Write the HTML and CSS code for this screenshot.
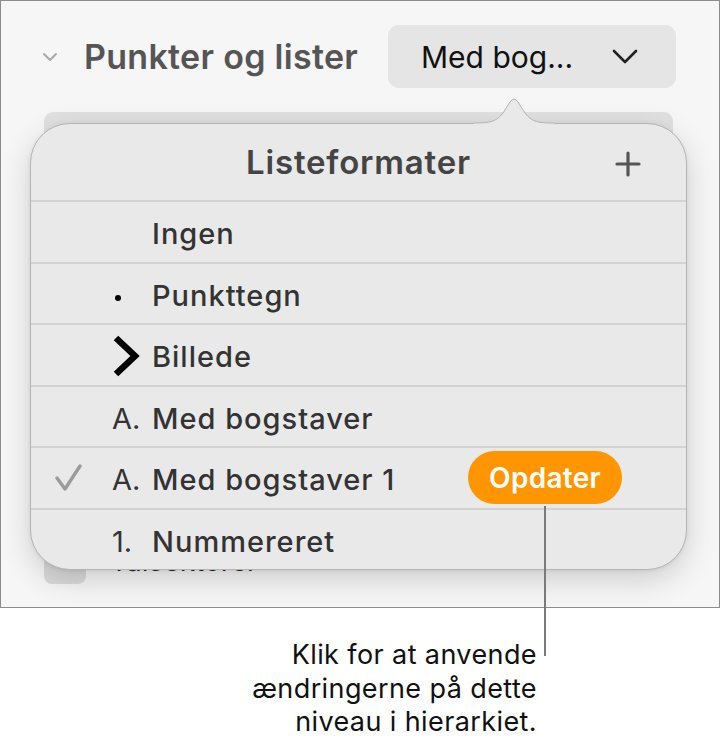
FILE: index.html
```html
<!DOCTYPE html>
<html lang="da">
<head>
    <meta charset="UTF-8">
    <meta name="viewport" content="width=device-width, initial-scale=1.0">
    <title>Listeformater</title>
    <link rel="stylesheet" href="styles.css">
</head>
<body>
    <div class="page">
        <div class="panel">
            <div class="section-header">
                <svg class="disclosure" viewBox="0 0 16 10" fill="none" stroke="currentColor" stroke-width="2" stroke-linecap="round" stroke-linejoin="round">
                    <path d="M2 2l6 6 6-6" />
                </svg>
                <span class="section-title">Punkter og lister</span>
                <div class="popup-button">
                    <span>Med bog...</span>
                    <svg class="popup-chevron" viewBox="0 0 26 18" fill="none" stroke="currentColor" stroke-width="2.6" stroke-linecap="round" stroke-linejoin="round">
                        <path d="M2 3l11 11 11-11" />
                    </svg>
                </div>
            </div>

            <div class="list-box"></div>

            <div class="option-row">
                <span class="checkbox"></span>
                <span class="option-label">Talsektorer</span>
            </div>

            <!-- popover with the list styles -->
            <div class="popover">
                <svg class="popover-arrow" viewBox="0 0 80 34">
                    <path class="arrow-fill" d="M0 30C16 30 22 29 29 20L36 9Q40 3 44 9L51 20C58 29 64 30 80 30V34H0Z" />
                    <path class="arrow-edge" d="M0 30C16 30 22 29 29 20L36 9Q40 3 44 9L51 20C58 29 64 30 80 30" />
                </svg>
                <div class="popover-header">
                    <span class="popover-title">Listeformater</span>
                    <svg class="add-icon" viewBox="0 0 26 26" fill="none" stroke="currentColor" stroke-width="3.2" stroke-linecap="round">
                        <path d="M13 2v22M2 13h22" />
                    </svg>
                </div>
                <ul class="style-list">
                    <li class="style-row">
                        <span class="check"></span>
                        <span class="marker"></span>
                        <span class="style-name">Ingen</span>
                    </li>
                    <li class="style-row">
                        <span class="check"></span>
                        <span class="marker"><span class="bullet"></span></span>
                        <span class="style-name">Punkttegn</span>
                    </li>
                    <li class="style-row">
                        <span class="check"></span>
                        <span class="marker">
                            <svg class="image-bullet" viewBox="0 0 28 42" fill="none" stroke="#000" stroke-width="6.5" stroke-linejoin="miter">
                                <path d="M4 3l19 18-19 18" />
                            </svg>
                        </span>
                        <span class="style-name">Billede</span>
                    </li>
                    <li class="style-row">
                        <span class="check"></span>
                        <span class="marker">A.</span>
                        <span class="style-name">Med bogstaver</span>
                    </li>
                    <li class="style-row">
                        <span class="check">
                            <svg class="check-icon" viewBox="0 0 28 28" fill="none" stroke="currentColor" stroke-width="3.4" stroke-linecap="round" stroke-linejoin="round">
                                <path d="M2 14l8 11L25 2" />
                            </svg>
                        </span>
                        <span class="marker">A.</span>
                        <span class="style-name">Med bogstaver 1</span>
                        <button class="update-button">Opdater</button>
                    </li>
                    <li class="style-row">
                        <span class="check"></span>
                        <span class="marker">1.</span>
                        <span class="style-name">Nummereret</span>
                    </li>
                </ul>
            </div>
        </div>

        <div class="callout-line"></div>
        <p class="callout">Klik for at anvende<br>ændringerne på dette<br>niveau i hierarkiet.</p>
    </div>
</body>
</html>
```

FILE: styles.css
```css
body {
    margin: 0;
    background-color: #fff;
    font-family: Inter, "Noto Sans", sans-serif;
}

.page {
    position: relative;
    width: 721px;
    height: 745px;
}

.panel {
    position: relative;
    box-sizing: border-box;
    width: 720px;
    height: 608px;
    border: 1px solid #8c8c8c;
    background-color: #f6f6f6;
    overflow: hidden;
}

/* section header */

.section-header {
    display: flex;
    align-items: center;
    height: 63px;
    margin-top: 24px;
    padding-left: 41px;
}

.disclosure {
    width: 16px;
    height: 10px;
    color: #a9a9a9;
}

.section-title {
    margin-left: 26px;
    font-size: 34px;
    font-weight: 600;
    color: #555;
    letter-spacing: 0.3px;
}

.popup-button {
    display: flex;
    align-items: center;
    box-sizing: border-box;
    width: 288px;
    height: 63px;
    margin-left: auto;
    margin-right: 43px;
    padding: 0 38px 0 33px;
    border-radius: 11px;
    background-color: #e5e5e5;
    font-size: 30px;
    color: #111;
}

.popup-chevron {
    width: 26px;
    height: 18px;
    margin-left: auto;
    color: #222;
}

/* controls half hidden behind the popover */

.list-box {
    height: 430px;
    margin: 24px 46px 0 43px;
    border-radius: 9px;
    background-color: #e0e0e0;
}

.option-row {
    display: flex;
    align-items: center;
    gap: 24px;
    margin: 12px 0 0 43px;
}

.checkbox {
    width: 42px;
    height: 30px;
    border-radius: 8px;
    background-color: #dadada;
}

.option-label {
    margin-top: -16px;
    font-size: 28px;
    color: #222;
}

/* popover */

.popover {
    position: absolute;
    left: 29px;
    top: 122px;
    box-sizing: border-box;
    width: 657px;
    height: 447px;
    border: 1px solid #b4b4b4;
    border-radius: 40px;
    background-color: #e9e9e9;
    box-shadow: 0 10px 30px rgba(0, 0, 0, 0.16), 0 1px 4px rgba(0, 0, 0, 0.08);
}

.popover-arrow {
    position: absolute;
    left: 443px;
    top: -31px;
    width: 80px;
    height: 34px;
}

.arrow-fill {
    fill: #e9e9e9;
}

.arrow-edge {
    fill: none;
    stroke: #b4b4b4;
    stroke-width: 1;
}

.popover-header {
    position: relative;
    display: flex;
    align-items: center;
    justify-content: center;
    height: 76px;
}

.popover-title {
    font-size: 33px;
    font-weight: 600;
    color: #444;
    letter-spacing: 0.8px;
}

.add-icon {
    position: absolute;
    right: 45px;
    top: 27px;
    width: 26px;
    height: 26px;
    color: #555;
}

.style-list {
    list-style: none;
    margin: 0;
    padding: 0;
}

.style-row {
    display: flex;
    align-items: center;
    box-sizing: border-box;
    height: 61.5px;
    padding-top: 4px;
    border-top: 2px solid #d2d2d2;
    font-size: 29px;
    color: #333;
}

.check {
    display: flex;
    align-items: center;
    justify-content: center;
    width: 76px;
}

.check-icon {
    width: 28px;
    height: 28px;
    margin-top: -4px;
    color: #9b9b9b;
}

.marker {
    display: flex;
    align-items: center;
    box-sizing: border-box;
    width: 45px;
    padding-left: 5px;
    font-weight: 400;
    color: #333;
}

.bullet {
    width: 6px;
    height: 6px;
    margin: 6px 0 0 3px;
    border-radius: 50%;
    background-color: #000;
}

.image-bullet {
    width: 28px;
    height: 42px;
    margin-top: -2px;
}

.style-name {
    font-weight: 500;
    letter-spacing: 1px;
}

.update-button {
    height: 53px;
    margin-top: -4px;
    margin-left: auto;
    margin-right: 64px;
    padding: 0 21px;
    border: none;
    border-radius: 27px;
    background-color: #ff9500;
    font-family: inherit;
    font-size: 28px;
    font-weight: 600;
    letter-spacing: 0.3px;
    color: #fff;
}

/* callout */

.callout-line {
    position: absolute;
    left: 544px;
    top: 506px;
    width: 2px;
    height: 150px;
    background-color: #7a7a7a;
}

.callout {
    width: 537px;
    margin: 30px 0 0;
    font-size: 27px;
    line-height: 33.5px;
    letter-spacing: 0.4px;
    text-align: right;
    color: #111;
}
```
